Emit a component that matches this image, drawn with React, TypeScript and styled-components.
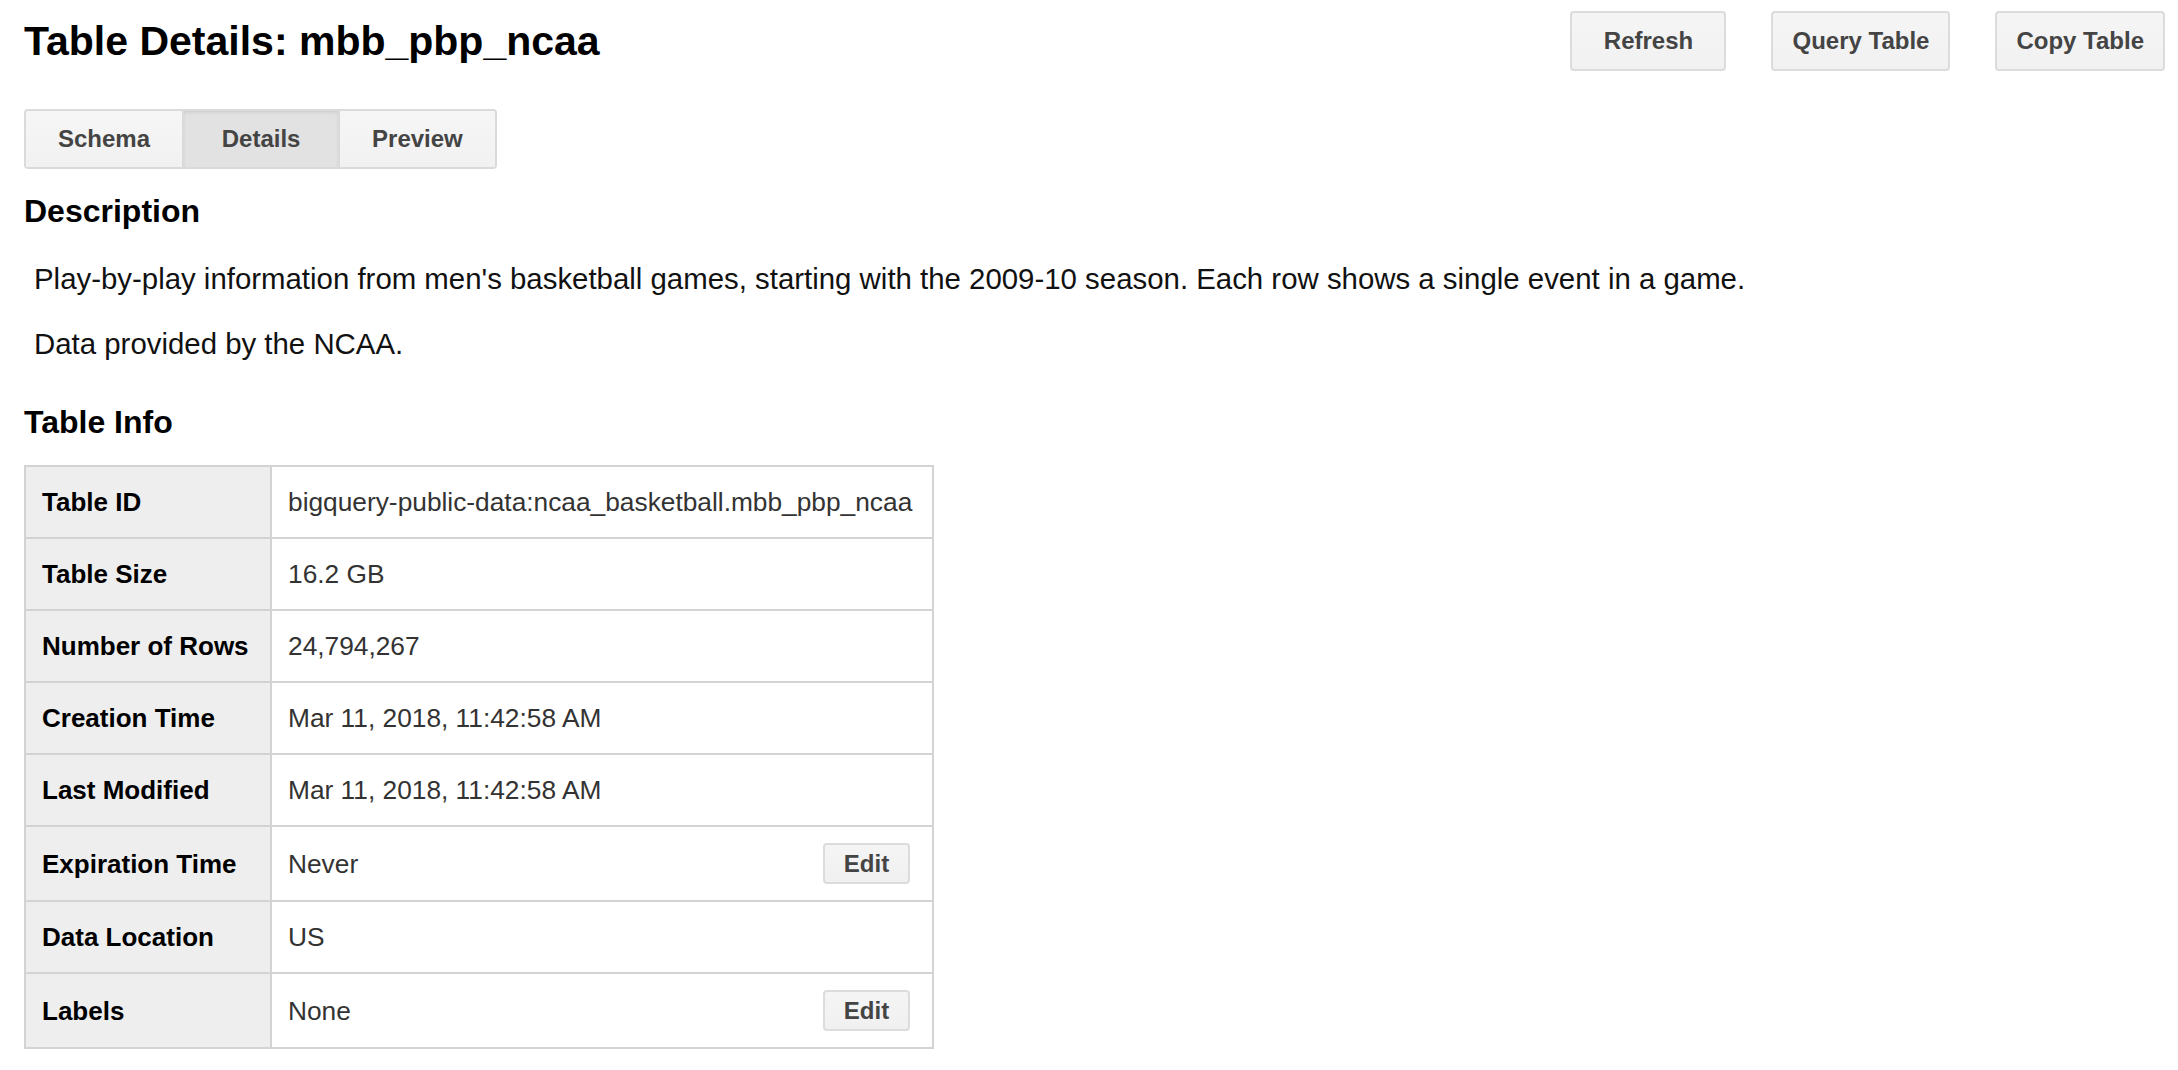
import React from "react";
import styled, { createGlobalStyle } from "styled-components";

const GlobalStyle = createGlobalStyle`
	body {
		margin: 0;
		background: #fff;
		font-family: "Liberation Sans", Arial, Helvetica, sans-serif;
		color: #000;
	}
`;

const Page = styled.div`
	padding: 11px 13px 0 24px;
`;

const Header = styled.header`
	display: flex;
	justify-content: space-between;
	align-items: center;
	height: 60px;
`;

const Title = styled.h1`
	margin: 0;
	font-size: 41px;
	line-height: 46px;
	font-weight: bold;
`;

const Actions = styled.div`
	display: flex;
	gap: 45px;
`;

const ActionButton = styled.button`
	height: 60px;
	min-width: 156px;
	padding: 0 19px;
	border: 2px solid #dcdcdc;
	border-radius: 4px;
	background: linear-gradient(#f5f5f5, #f1f1f1);
	font-family: inherit;
	font-size: 24px;
	font-weight: bold;
	color: #444;
`;

const Tabs = styled.div`
	display: inline-flex;
	margin-top: 38px;
	border: 2px solid #dadada;
	border-radius: 4px;
	overflow: hidden;
`;

const Tab = styled.div<{ $active?: boolean }>`
	min-width: 156px;
	height: 56px;
	padding: 0 32px;
	box-sizing: border-box;
	display: flex;
	align-items: center;
	justify-content: center;
	font-size: 24px;
	font-weight: bold;
	color: #444;
	background: ${(p) => (p.$active ? "#e2e2e2" : "linear-gradient(#f6f6f6, #f1f1f1)")};
	box-shadow: ${(p) => (p.$active ? "inset 0 2px 3px rgba(0,0,0,0.08)" : "none")};
	& + & {
		border-left: 2px solid #dadada;
	}
`;

const SectionTitle = styled.h2<{ $gap: number }>`
	margin: ${(p) => p.$gap}px 0 0;
	font-size: 32px;
	line-height: 36px;
	font-weight: bold;
`;

const Paragraph = styled.p<{ $gap: number }>`
	margin: ${(p) => p.$gap}px 0 0;
	padding-left: 10px;
	font-size: 29.4px;
	line-height: 40px;
	color: #111;
`;

const InfoTable = styled.table`
	margin-top: 25px;
	width: 910px;
	border-collapse: collapse;
	table-layout: fixed;
	font-size: 26px;
`;

const Cell = styled.td`
	border: 2px solid #d3d3d3;
	padding: 16px 14px 16px 16px;
	line-height: 38px;
	vertical-align: middle;
	font-size: 26.3px;
	color: #333;
`;

const LabelCell = styled(Cell)`
	width: 214px;
	padding-left: 16px;
	padding-right: 14px;
	background: #eee;
	font-size: 26px;
	font-weight: bold;
	color: #000;
`;

const ValueRow = styled.div`
	display: flex;
	justify-content: space-between;
	align-items: center;
	padding-right: 8px;
`;

const EditButton = styled.button`
	height: 41px;
	width: 87px;
	border: 2px solid #dcdcdc;
	border-radius: 4px;
	background: linear-gradient(#f5f5f5, #f0f0f0);
	font-family: inherit;
	font-size: 24px;
	font-weight: bold;
	color: #444;
	padding: 0;
`;

const rows: { label: string; value: string; editable?: boolean }[] = [
	{ label: "Table ID", value: "bigquery-public-data:ncaa_basketball.mbb_pbp_ncaa" },
	{ label: "Table Size", value: "16.2 GB" },
	{ label: "Number of Rows", value: "24,794,267" },
	{ label: "Creation Time", value: "Mar 11, 2018, 11:42:58 AM" },
	{ label: "Last Modified", value: "Mar 11, 2018, 11:42:58 AM" },
	{ label: "Expiration Time", value: "Never", editable: true },
	{ label: "Data Location", value: "US" },
	{ label: "Labels", value: "None", editable: true }
];

const App = (): JSX.Element => {
	return (
		<Page>
			<GlobalStyle />
			<Header>
				<Title>Table Details: mbb_pbp_ncaa</Title>
				<Actions>
					<ActionButton>Refresh</ActionButton>
					<ActionButton>Query Table</ActionButton>
					<ActionButton>Copy Table</ActionButton>
				</Actions>
			</Header>
			<Tabs>
				<Tab>Schema</Tab>
				<Tab $active>Details</Tab>
				<Tab>Preview</Tab>
			</Tabs>
			<SectionTitle $gap={24}>Description</SectionTitle>
			<Paragraph $gap={30}>
				Play-by-play information from men's basketball games, starting with the 2009-10 season. Each row shows a single
				event in a game.
			</Paragraph>
			<Paragraph $gap={25}>Data provided by the NCAA.</Paragraph>
			<SectionTitle $gap={40}>Table Info</SectionTitle>
			<InfoTable>
				<tbody>
					{rows.map((r) => (
						<tr key={r.label}>
							<LabelCell>{r.label}</LabelCell>
							<Cell>
								{r.editable ? (
									<ValueRow>
										<span>{r.value}</span>
										<EditButton>Edit</EditButton>
									</ValueRow>
								) : (
									r.value
								)}
							</Cell>
						</tr>
					))}
				</tbody>
			</InfoTable>
		</Page>
	);
};

export default App;
